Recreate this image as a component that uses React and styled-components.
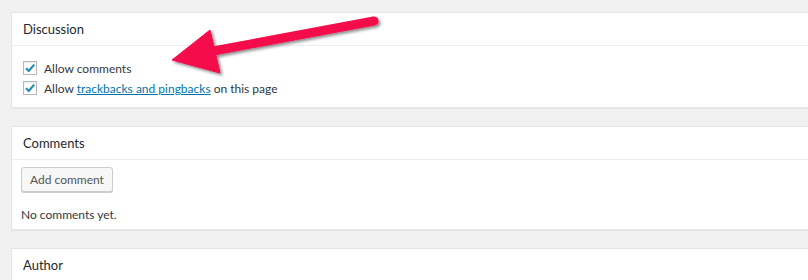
import React from "react"
import styled, { createGlobalStyle } from "styled-components"

const GlobalStyle = createGlobalStyle`
  html, body {
    margin: 0;
    padding: 0;
    background: #f1f1f1;
    overflow: hidden;
  }
  body {
    font-family: Lato, "Liberation Sans", sans-serif;
    color: #23282d;
  }
`

const Page = styled.div`
  position: relative;
  width: 808px;
  height: 280px;
  overflow: hidden;
  padding: 12px 0 0 11px;
  box-sizing: border-box;
  display: flex;
  flex-direction: column;
  gap: 18px;
`

const Postbox = styled.div`
  width: 830px;
  background: #fff;
  border: 1px solid #e5e5e5;
  box-shadow: 0 1px 1px rgba(0, 0, 0, 0.04);
  flex-shrink: 0;
`

const Heading = styled.h2`
  margin: 0;
  height: 32px;
  display: flex;
  align-items: center;
  padding: 0 11px;
  font-size: 13px;
  font-weight: 400;
  color: #23282d;
  border-bottom: 1px solid #eee;
`

const Inside = styled.div`
  padding: ${(p) => p.$pad || "12px 11px 9px"};
  font-size: 12px;
`

const Option = styled.label`
  display: flex;
  align-items: center;
  gap: 7px;
  height: 20px;
  font-size: 12px;
  color: #32373c;
`

const Box = styled.span`
  width: 12px;
  height: 12px;
  border: 1px solid #b4b9be;
  background: #fff;
  box-shadow: inset 0 1px 2px rgba(0, 0, 0, 0.1);
  display: flex;
  align-items: center;
  justify-content: center;
  flex-shrink: 0;
`

const Link = styled.a`
  color: #0073aa;
  text-decoration: underline;
`

const Button = styled.button`
  display: block;
  height: 25px;
  padding: 0 8px;
  font-family: inherit;
  font-size: 12px;
  color: #555;
  background: #f7f7f7;
  border: 1px solid #ccc;
  border-radius: 3px;
  box-shadow: 0 1px 0 #ccc;
  cursor: pointer;
`

const Note = styled.p`
  margin: 16px 0 0;
  font-size: 12px;
  line-height: 14px;
  color: #32373c;
`

const Pointer = styled.svg`
  position: absolute;
  left: 0;
  top: 0;
  pointer-events: none;
`

const Check = () => (
  <Box>
    <svg width="12" height="12" viewBox="0 0 12 12">
      <path d="M2 6.2 L4.8 9 L10.2 2.6" fill="none" stroke="#1e8cbe" strokeWidth="2.2" />
    </svg>
  </Box>
)

const App = () => (
  <>
    <GlobalStyle />
    <Page>
      <Postbox>
        <Heading>Discussion</Heading>
        <Inside>
          <Option><Check />Allow comments</Option>
          <Option>
            <Check />
            <span>Allow <Link href="#">trackbacks and pingbacks</Link> on this page</span>
          </Option>
        </Inside>
      </Postbox>
      <Postbox>
        <Heading>Comments</Heading>
        <Inside $pad="7px 9px 7px">
          <Button>Add comment</Button>
          <Note>No comments yet.</Note>
        </Inside>
      </Postbox>
      <Postbox>
        <Heading>Author</Heading>
        <Inside />
      </Postbox>
      <Pointer width="808" height="280">
        <defs>
          <filter id="shade" x="-20%" y="-40%" width="140%" height="180%">
            <feDropShadow dx="2" dy="2" stdDeviation="1.5" floodColor="#000" floodOpacity="0.45" />
          </filter>
        </defs>
        <g filter="url(#shade)" fill="#f5084b" stroke="#f5084b">
          <line x1="374" y1="21" x2="208" y2="52" strokeWidth="9" strokeLinecap="round" />
          <polygon points="172,60 210,30 220,73" strokeWidth="1" />
        </g>
      </Pointer>
    </Page>
  </>
)

export default App
